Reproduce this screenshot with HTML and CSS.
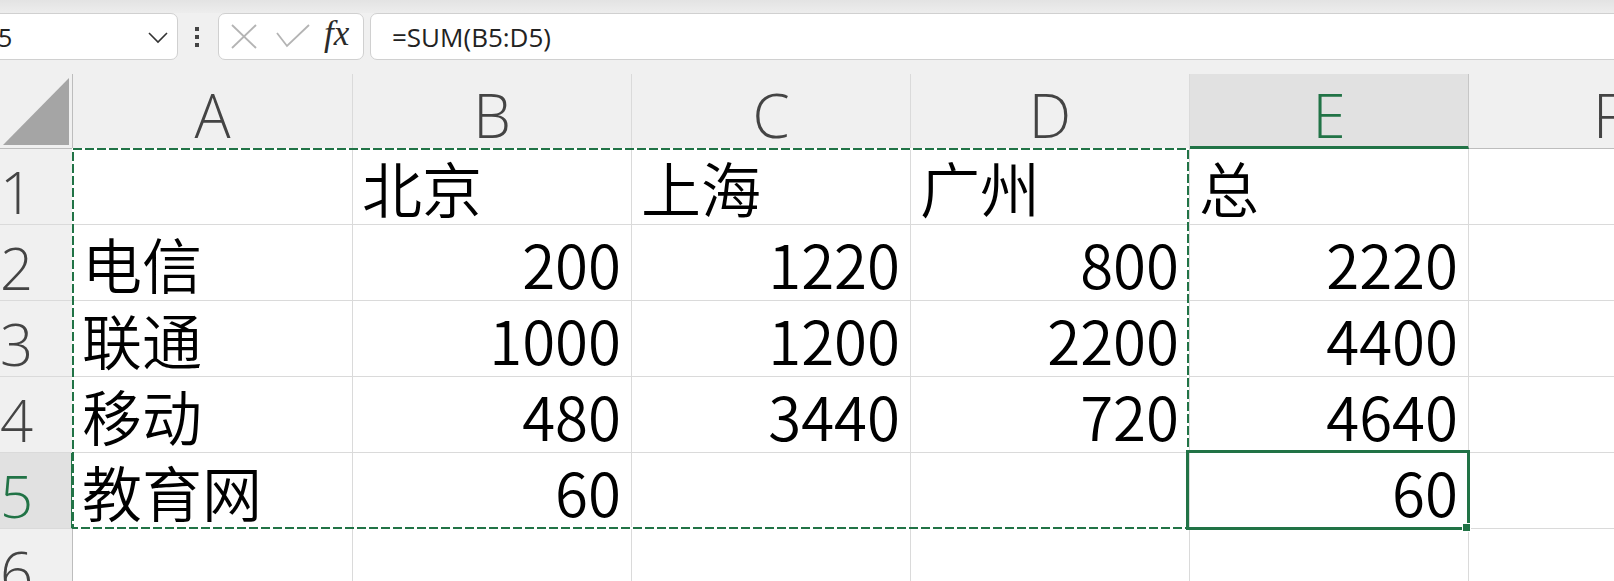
FILE: index.html
```html
<!DOCTYPE html>
<html lang="zh-CN">
<head>
    <meta charset="UTF-8">
    <title>Sheet1</title>
    <link rel="stylesheet" href="styles.css">
</head>
<body>

<div class="toolbar">
    <div class="namebox">
        <span class="name">E5</span>
        <svg class="chevron" width="20" height="12" viewBox="0 0 20 12">
            <polyline points="1,1 10,10 19,1" fill="none" stroke="#333" stroke-width="1.6"/>
        </svg>
    </div>
    <div class="dots"><i></i><i></i><i></i></div>
    <div class="fxbox">
        <svg class="cancel" width="26" height="25" viewBox="0 0 26 25">
            <line x1="1" y1="1" x2="25" y2="24" stroke="#b4b4b4" stroke-width="1.8"/>
            <line x1="25" y1="1" x2="1" y2="24" stroke="#b4b4b4" stroke-width="1.8"/>
        </svg>
        <svg class="enter" width="34" height="25" viewBox="0 0 34 25">
            <polyline points="1,9 11,22 33,1" fill="none" stroke="#b4b4b4" stroke-width="1.8"/>
        </svg>
        <span class="fx">fx</span>
    </div>
    <div class="formula">=SUM(B5:D5)</div>
</div>

<div class="sheet">
    <div class="grid">
        <div class="corner">
            <svg width="72" height="74" viewBox="0 0 72 74">
                <polygon points="3,71 69,71 69,4" fill="#a5a5a5"/>
            </svg>
        </div>
        <div class="colhead">A</div>
        <div class="colhead">B</div>
        <div class="colhead">C</div>
        <div class="colhead">D</div>
        <div class="colhead active">E</div>
        <div class="colhead">F</div>

        <div class="rowhead">1</div>
        <div class="cell"></div>
        <div class="cell">北京</div>
        <div class="cell">上海</div>
        <div class="cell">广州</div>
        <div class="cell">总</div>
        <div class="cell"></div>

        <div class="rowhead">2</div>
        <div class="cell">电信</div>
        <div class="cell num">200</div>
        <div class="cell num">1220</div>
        <div class="cell num">800</div>
        <div class="cell num">2220</div>
        <div class="cell"></div>

        <div class="rowhead">3</div>
        <div class="cell">联通</div>
        <div class="cell num">1000</div>
        <div class="cell num">1200</div>
        <div class="cell num">2200</div>
        <div class="cell num">4400</div>
        <div class="cell"></div>

        <div class="rowhead">4</div>
        <div class="cell">移动</div>
        <div class="cell num">480</div>
        <div class="cell num">3440</div>
        <div class="cell num">720</div>
        <div class="cell num">4640</div>
        <div class="cell"></div>

        <div class="rowhead active">5</div>
        <div class="cell">教育网</div>
        <div class="cell num">60</div>
        <div class="cell num"></div>
        <div class="cell num"></div>
        <div class="cell num">60</div>
        <div class="cell"></div>

        <div class="rowhead">6</div>
        <div class="cell"></div>
        <div class="cell"></div>
        <div class="cell"></div>
        <div class="cell"></div>
        <div class="cell"></div>
        <div class="cell"></div>
    </div>

    <!-- copy marquee around A1:D5 -->
    <svg class="marquee" width="1117" height="381" viewBox="0 0 1117 381">
        <rect x="1" y="1" width="1115" height="379" fill="none" stroke="#ffffff" stroke-width="2"/>
        <rect x="1" y="1" width="1115" height="379" fill="none" stroke="#217346" stroke-width="2" stroke-dasharray="9 3"/>
    </svg>
    <!-- active cell E5 -->
    <div class="selection"></div>
    <div class="handle"></div>
</div>

</body>
</html>
```

FILE: styles.css
```css
html, body {
    margin: 0;
    padding: 0;
}
body {
    width: 1614px;
    height: 581px;
    overflow: hidden;
    background-color: #f0f0f0;
    font-family: "Open Sans", "Noto Sans", sans-serif;
}
.toolbar {
    display: flex;
    align-items: flex-start;
    height: 74px;
    padding-top: 13px;
    box-sizing: border-box;
    background: linear-gradient(#e3e3e3, #ededed 13px, #f0f0f0 13px);
}
.namebox,
.fxbox,
.formula {
    height: 47px;
    box-sizing: border-box;
    background: white;
    border: 1px solid #d0d0d0;
    border-radius: 7px;
    display: flex;
    align-items: center;
}
.namebox {
    margin-left: -29px;
    width: 207px;
    padding: 0 9px 0 12px;
    justify-content: space-between;
    font-size: 25px;
    color: #222;
}
.chevron {
    margin-top: 2px;
}
.dots {
    margin-left: 17px;
    width: 5px;
    height: 47px;
    display: flex;
    flex-direction: column;
    justify-content: center;
    gap: 4px;
}
.dots i {
    display: block;
    width: 4px;
    height: 4px;
    background: #444;
}
.fxbox {
    margin-left: 18px;
    width: 146px;
    padding-left: 12px;
}
.enter {
    margin-left: 19px;
}
.fx {
    margin-left: 14px;
    font-family: "Liberation Serif", serif;
    font-style: italic;
    font-size: 35px;
    color: #2b2b2b;
    margin-top: -5px;
}
.formula {
    margin-left: 6px;
    flex: 1;
    margin-right: -20px;
    padding-left: 21px;
    font-size: 26px;
    color: #222;
}
.sheet {
    position: relative;
    overflow: hidden;
}
.grid {
    display: grid;
    grid-template-columns: 73px 280px 279px 279px 279px 279px 279px;
    grid-template-rows: 75px;
    grid-auto-rows: 76px;
}
.corner {
    border-right: 1px solid #bdbdbd;
    border-bottom: 1px solid #bdbdbd;
    background: #f0f0f0;
}
.corner svg {
    display: block;
}
.colhead {
    display: flex;
    align-items: flex-end;
    justify-content: center;
    padding-bottom: 3px;
    box-sizing: border-box;
    border-right: 1px solid #dadada;
    border-bottom: 1px solid #bdbdbd;
    font-size: 60px;
    line-height: 1;
    color: #444;
    font-weight: 300;
}
.colhead.active {
    background: #e1e1e1;
    color: #217346;
    border-bottom: 3px solid #217346;
    border-right-color: #c6c6c6;
    padding-bottom: 1px;
}
.rowhead {
    display: flex;
    align-items: flex-end;
    padding: 0 0 3px 0;
    box-sizing: border-box;
    border-right: 1px solid #bdbdbd;
    border-bottom: 1px solid #dadada;
    font-size: 58px;
    line-height: 1;
    color: #444;
    font-weight: 300;
    overflow: hidden;
}
.rowhead.active {
    background: #e1e1e1;
    color: #217346;
    border-right: 2px solid #217346;
}
.cell {
    display: flex;
    align-items: flex-end;
    padding: 0 10px 7px 9px;
    box-sizing: border-box;
    background: white;
    border-right: 1px solid #dadada;
    border-bottom: 1px solid #dadada;
    font-family: "Noto Sans CJK SC", sans-serif;
    font-size: 60px;
    font-weight: 350;
    line-height: 1;
    color: #000;
    white-space: nowrap;
}
.cell.num {
    justify-content: flex-end;
}
.marquee {
    position: absolute;
    left: 72px;
    top: 74px;
}
.selection {
    position: absolute;
    left: 1186px;
    top: 376px;
    width: 284px;
    height: 80px;
    box-sizing: border-box;
    border: 3px solid #217346;
}
.handle {
    position: absolute;
    left: 1462px;
    top: 449px;
    width: 9px;
    height: 9px;
    box-sizing: border-box;
    background: #217346;
    border: 1px solid white;
}
```
